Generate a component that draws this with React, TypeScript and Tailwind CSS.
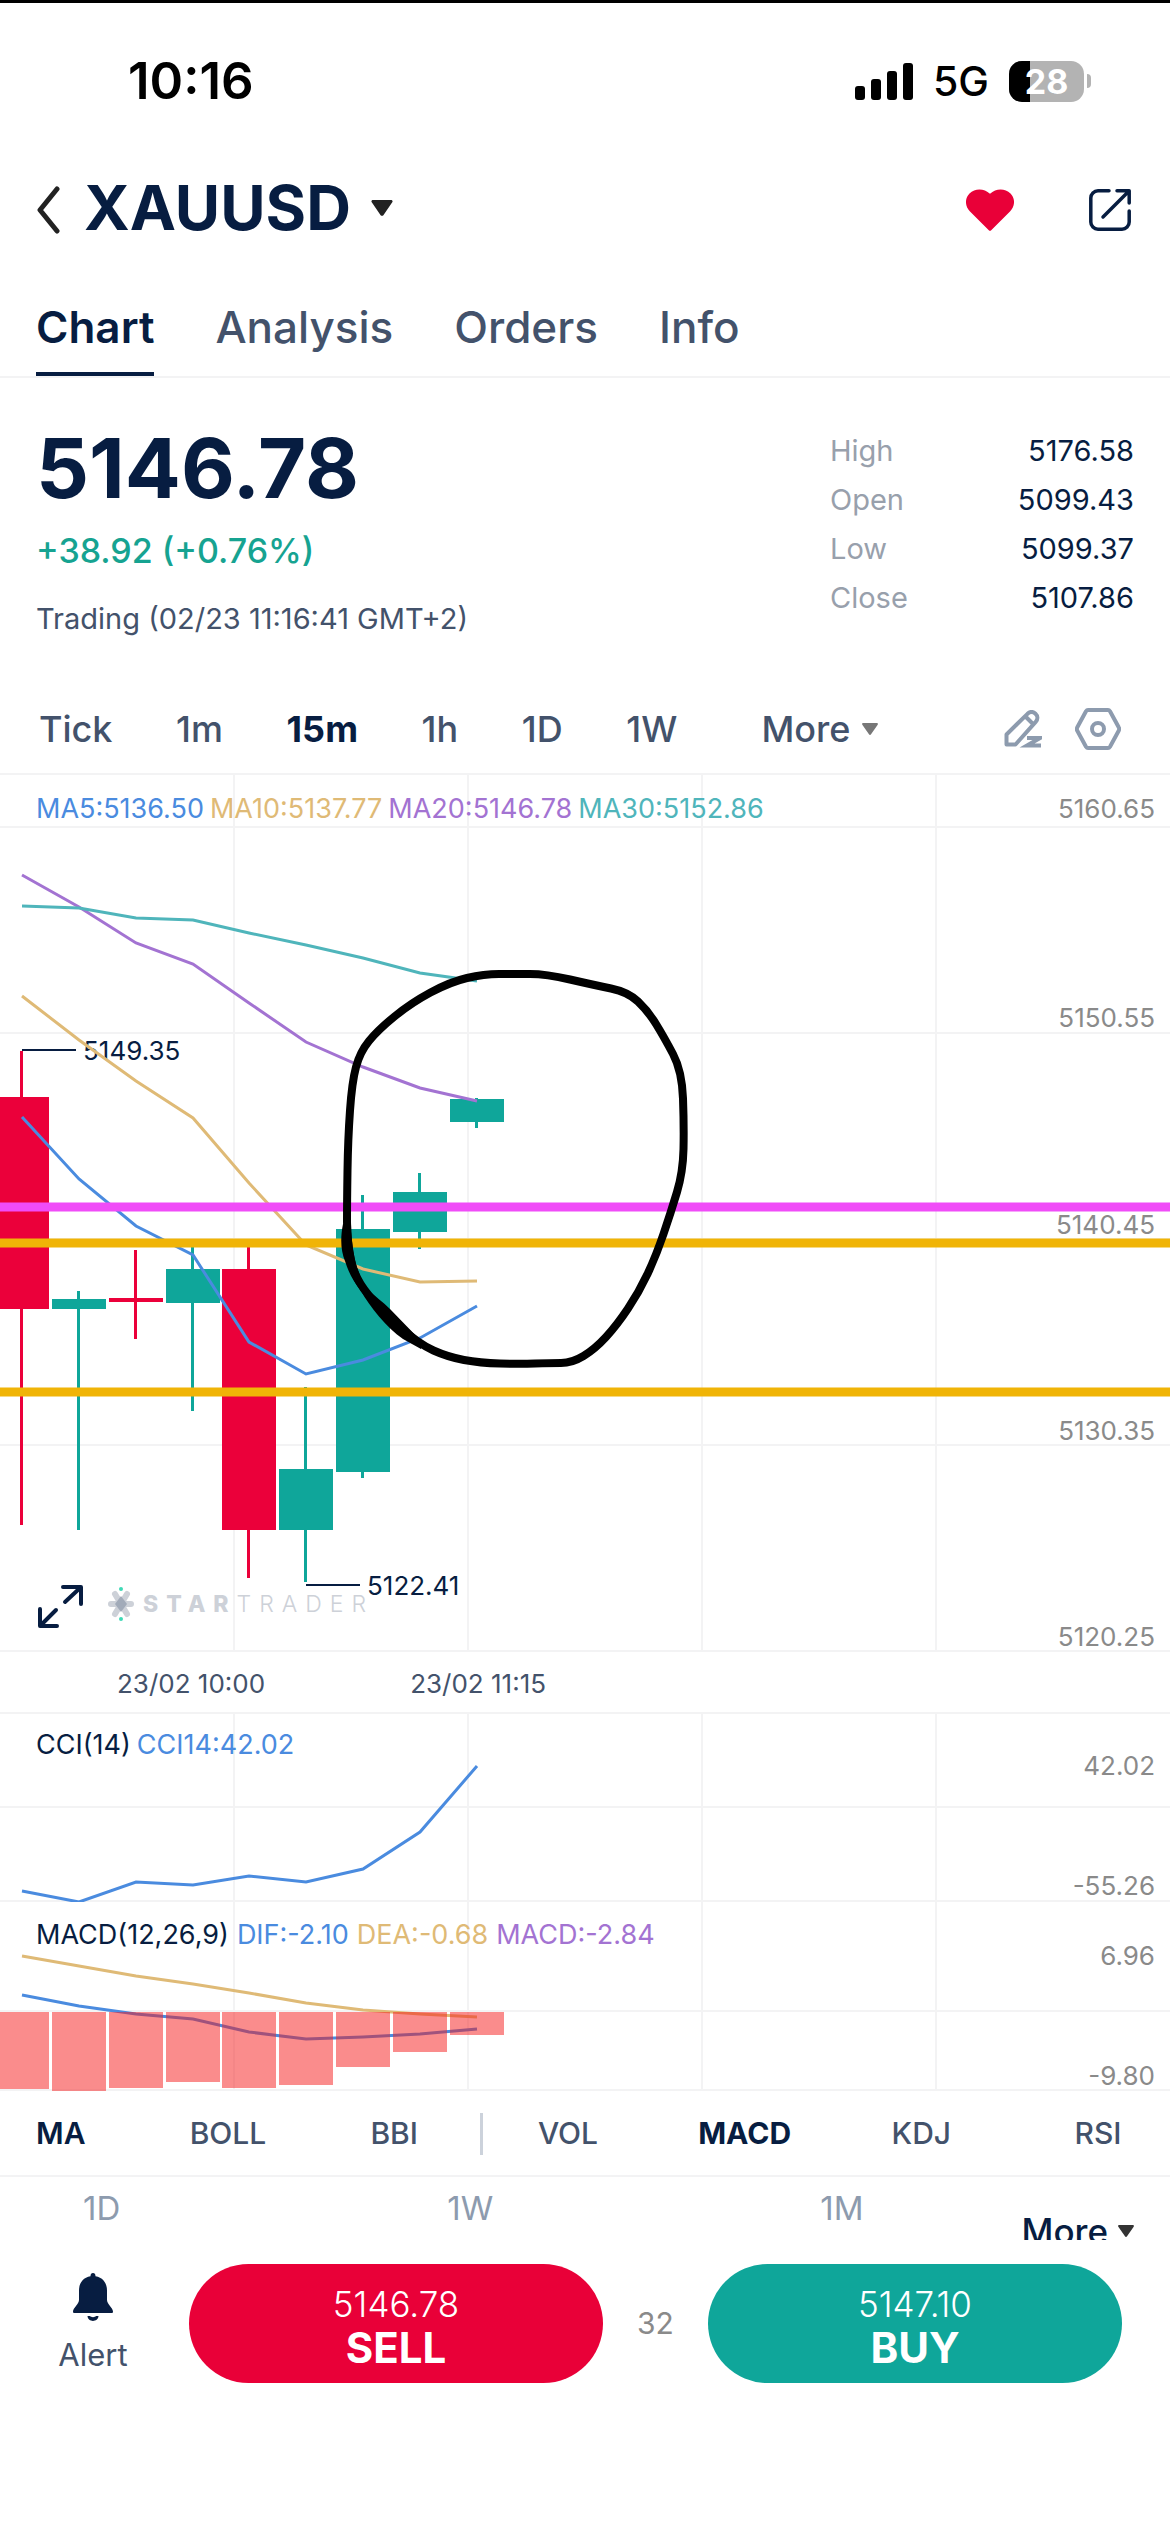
import { useState } from "react"

const STEP = 57
const FIRST_X = 22

const candles = [
  { up: false, top: 1098, bottom: 1310, high: 1052, low: 1526 },
  { up: true, top: 1300, bottom: 1310, high: 1292, low: 1531 },
  { up: false, top: 1299, bottom: 1303, high: 1251, low: 1340 },
  { up: true, top: 1270, bottom: 1304, high: 1245, low: 1412 },
  { up: false, top: 1270, bottom: 1531, high: 1245, low: 1579 },
  { up: true, top: 1470, bottom: 1531, high: 1388, low: 1583 },
  { up: true, top: 1230, bottom: 1473, high: 1196, low: 1479 },
  { up: true, top: 1193, bottom: 1233, high: 1174, low: 1250 },
  { up: true, top: 1100, bottom: 1123, high: 1099, low: 1129 },
]

const ma5 = [1118, 1180, 1227, 1256, 1343, 1375, 1361, 1339, 1307]
const ma10 = [997, 1041, 1082, 1119, 1184, 1246, 1270, 1283, 1282]
const ma20 = [876, 908, 944, 965, 1004, 1043, 1068, 1089, 1102]
const ma30 = [907, 909, 919, 921, 934, 946, 959, 974, 982]
const cci = [1892, 1903, 1883, 1886, 1877, 1883, 1870, 1833, 1767]
const dea = [1957, 1967, 1977, 1985, 1994, 2004, 2011, 2015, 2018]
const dif = [1996, 2007, 2015, 2020, 2033, 2040, 2038, 2035, 2030]
const macd = [2090, 2092, 2089, 2083, 2089, 2086, 2068, 2053, 2036]

const priceLabels = [
  { text: "5160.65", y: 819 },
  { text: "5150.55", y: 1028 },
  { text: "5140.45", y: 1235 },
  { text: "5130.35", y: 1441 },
  { text: "5120.25", y: 1647 },
]

// Freehand loop drawn around the last candles
const loop = [
  [347, 1243], [347, 1203], [348, 1140], [352, 1083], [360, 1053], [378, 1031], [411, 1004],
  [450, 983], [484, 975], [514, 975], [546, 975], [594, 986], [628, 993], [648, 1012],
  [664, 1038], [682, 1072], [684, 1127], [683, 1173], [671, 1213], [656, 1257], [639, 1293],
  [617, 1326], [595, 1350], [572, 1364], [550, 1364], [520, 1365], [480, 1364], [448, 1358],
  [419, 1345], [383, 1313], [355, 1280],
]

const x = (i: number) => FIRST_X + i * STEP - Math.round(i * 0.15)
const line = (ys: number[]) => ys.map((y, i) => `${x(i)},${y}`).join(" ")

// Closed curve through the midpoints of the given points
function smooth(points: number[][]) {
  const mid = (a: number[], b: number[]) => `${(a[0] + b[0]) / 2} ${(a[1] + b[1]) / 2}`
  const last = points[points.length - 1]
  const parts = points.map((p, i) => `Q${p[0]} ${p[1]} ${mid(p, points[(i + 1) % points.length])}`)
  return `M${mid(last, points[0])}${parts.join("")}z`
}

function Grid({ top, bottom, rows }: { top: number; bottom: number; rows: number[] }) {
  return (
    <g stroke="#f3f3f4" strokeWidth="2">
      {[234, 468, 702, 936].map((v) => (
        <line key={v} x1={v} x2={v} y1={top} y2={bottom} />
      ))}
      {rows.map((v) => (
        <line key={v} x1="0" x2="1170" y1={v} y2={v} />
      ))}
    </g>
  )
}

function AxisLabel({ text, y }: { text: string; y: number }) {
  return (
    <text x="1155" y={y} textAnchor="end" fontSize="26" fill="#8a8a8a">
      {text}
    </text>
  )
}

function Caret({ className }: { className: string }) {
  return (
    <svg viewBox="0 0 20 15" className={className} fill="currentColor" aria-hidden="true">
      <path d="M1.5 0h17c1.2 0 1.8 1.2 1.1 2.200l-8.300 12c-.6.900-2 .900-2.600 0L.4 2.200C-.3 1.200.3 0 1.500 0z" />
    </svg>
  )
}

function StatusBar() {
  return (
    <div className="flex items-center justify-between border-t-3 border-black pt-[48px] pr-[79px] pl-[128px] text-black">
      <span className="text-[51px] leading-[60px] font-semibold">10:16</span>
      <div className="flex items-center">
        <svg viewBox="0 0 58 37" className="h-[37px] w-[58px]" aria-label="Signal">
          <rect x="0" y="23" width="10" height="14" rx="3" />
          <rect x="16" y="16" width="10" height="21" rx="3" />
          <rect x="32" y="8" width="10" height="29" rx="3" />
          <rect x="48" y="0" width="10" height="37" rx="3" />
        </svg>
        <span className="ml-5 text-[41px] leading-[60px] font-medium">5G</span>
        <div className="relative ml-5 h-[41px] w-[75px] overflow-hidden rounded-[13px] bg-[#b3b3b3]">
          <div className="h-full w-[28%] bg-black" />
          <span className="absolute inset-0 text-center text-[34px] leading-[41px] font-bold text-white">28</span>
        </div>
        <div className="ml-[3px] h-[14px] w-1 rounded-r-full bg-[#b3b3b3]" />
      </div>
    </div>
  )
}

function Header() {
  return (
    <header className="mt-[59px] flex h-[80px] items-center px-9">
      <button aria-label="Back">
        <svg viewBox="0 0 24 48" className="h-12 w-6" fill="none" stroke="#222" strokeWidth="5" strokeLinecap="round" strokeLinejoin="round">
          <path d="M21 3 4 24l17 21" />
        </svg>
      </button>
      <button className="ml-6 flex items-center gap-5 pb-1">
        <h1 className="text-[62px] leading-[80px] font-bold">XAUUSD</h1>
        <Caret className="h-4 w-[22px] text-[#222]" />
      </button>
      <div className="ml-auto flex items-center gap-[75px] pr-[3px]">
        <button aria-label="Favourite">
          <svg viewBox="0 0 48 42" className="h-[42px] w-12" fill="#e90038">
            <path d="M22.800 41.300 4 22.500C-1.200 17-1.400 9.400 3.500 4.500 9-1 18-1 24 4.800 30-1 39-1 44.500 4.500c4.900 4.900 4.700 12.500-.5 18L25.200 41.300c-.7.7-1.700.7-2.400 0z" />
          </svg>
        </button>
        <button aria-label="Share">
          <svg viewBox="0 0 42 42" className="h-[42px] w-[42px]" fill="none" stroke="#071d41" strokeWidth="3.500" strokeLinecap="round" strokeLinejoin="round">
            <path d="M20 1.800H9C5 1.800 1.800 5 1.800 9v24c0 4 3.200 7.200 7.200 7.200h24c4 0 7.200-3.200 7.200-7.200V22" />
            <path d="M28 1.800h12.200V14M39.500 2.500 14 28" />
          </svg>
        </button>
      </div>
    </header>
  )
}

function Tabs() {
  const [active, setActive] = useState("Chart")
  return (
    <nav className="mt-[20px] flex gap-[61px] border-b-2 border-[#f3f3f4] px-9">
      {["Chart", "Analysis", "Orders", "Info"].map((tab) => (
        <button
          key={tab}
          onClick={() => setActive(tab)}
          className={`border-b-4 pt-[30px] pb-[18px] text-[44px] leading-[54px] ${
            tab === active ? "border-[#071d41] font-semibold" : "border-transparent font-medium text-[#43526b]"
          }`}
        >
          {tab}
        </button>
      ))}
    </nav>
  )
}

function Quote() {
  const stats = [
    ["High", "5176.58"],
    ["Open", "5099.43"],
    ["Low", "5099.37"],
    ["Close", "5107.86"],
  ]
  return (
    <section className="flex justify-between px-9 pt-12">
      <div>
        <p className="text-[83px] leading-[84px] font-bold">5146.78</p>
        <p className="mt-4 text-[34px] leading-[50px] font-medium text-[#16a391]">+38.92 (+0.76%)</p>
        <p className="mt-[22px] text-[29px] leading-[42px] text-[#43526b]">Trading (02/23 11:16:41 GMT+2)</p>
      </div>
      <dl className="w-[304px] text-[29px] leading-[49px]">
        {stats.map(([label, value]) => (
          <div key={label} className="flex justify-between">
            <dt className="text-[#98a0ac]">{label}</dt>
            <dd>{value}</dd>
          </div>
        ))}
      </dl>
    </section>
  )
}

function Intervals() {
  const [active, setActive] = useState("15m")
  return (
    <div className="mt-[45px] flex h-[90px] items-center border-b-2 border-[#f3f3f4] pr-[49px] pl-[39px] text-[36px] font-medium text-[#43526b]">
      <div className="flex w-[59%] justify-between">
        {["Tick", "1m", "15m", "1h", "1D", "1W"].map((item) => (
          <button key={item} onClick={() => setActive(item)} className={item === active ? "font-bold text-[#071d41]" : ""}>
            {item}
          </button>
        ))}
      </div>
      <button className="ml-[84px] flex items-center gap-3">
        More
        <Caret className="h-3 w-4 text-[#777]" />
      </button>
      <div className="ml-auto flex items-center gap-[33px] text-[#8d9bae]">
        <button aria-label="Draw">
          <svg viewBox="0 0 38 38" className="h-[38px] w-[38px]" fill="none" stroke="currentColor" strokeWidth="4" strokeLinejoin="round">
            <path d="M2.500 34.500v-10L23.500 3.800c2.500-2.300 5.500-2.300 8 0s2.500 5.500.2 8L11.500 34.500zM21.500 6.500l8 8" />
            <path d="M23 28h13l-13 7.500h14" strokeLinejoin="miter" />
          </svg>
        </button>
        <button aria-label="Chart settings">
          <svg viewBox="0 0 46 42" className="h-[42px] w-[46px]" fill="none" stroke="currentColor" strokeWidth="4" strokeLinejoin="round">
            <path d="M13 2h20c1 0 1.500.5 2 1.300l8.700 16c.6 1 .6 2.300 0 3.400l-8.700 16c-.5.800-1 1.300-2 1.300H13c-1 0-1.500-.5-2-1.300l-8.700-16c-.6-1-.6-2.300 0-3.400l8.700-16C11.500 2.500 12 2 13 2z" />
            <circle cx="23" cy="21" r="6" />
          </svg>
        </button>
      </div>
    </div>
  )
}

function PriceChart() {
  return (
    <section className="relative">
      <div className="absolute top-[15px] left-9 flex gap-[6px] text-[27px] leading-[38px]">
        <span className="text-[#4a8bdf]">MA5:5136.50</span>
        <span className="text-[#dfba76]">MA10:5137.77</span>
        <span className="text-[#a373d2]">MA20:5146.78</span>
        <span className="text-[#4fb5bb]">MA30:5152.86</span>
      </div>
      <svg viewBox="0 776 1170 877" className="block w-full" role="img" aria-label="XAUUSD candles">
        <Grid top={776} bottom={1652} rows={[828, 1034, 1240, 1446, 1652]} />
        {priceLabels.map((label) => (
          <AxisLabel key={label.text} {...label} />
        ))}

        {/* Watermark */}
        <g stroke="#cdd1d8" strokeWidth="6" strokeLinecap="round">
          <path d="M111 1605h20M115 1595l12 20M127 1595l-12 20" />
        </g>
        <path d="M121 1597l6 8-6 8-6-8z" fill="#a2abb9" />
        <circle cx="121" cy="1590" r="2" fill="#3fd9b6" />
        <circle cx="121" cy="1620" r="2" fill="#3fd9b6" />
        <text x="143" y="1613" fontSize="23" fill="#cdd1d8" className="tracking-[8px]">
          <tspan fontWeight="800">STAR</tspan>
          <tspan fontWeight="300">TRADER</tspan>
        </text>

        {candles.map((c, i) => (
          <g key={i} fill={c.up ? "#0fa69a" : "#eb003a"}>
            <rect x={x(i) - 2} y={c.high} width="3" height={c.low - c.high} />
            <rect x={x(i) - 27} y={c.top} width="54" height={c.bottom - c.top} />
          </g>
        ))}

        {/* High and low callouts */}
        <path d="M22 1051h54M306 1586h54" stroke="#071d41" strokeWidth="2" />
        <g fontSize="26" fill="#071d41">
          <text x="83" y="1061">5149.35</text>
          <text x="367" y="1596">5122.41</text>
        </g>

        <g fill="none" strokeWidth="3">
          <polyline points={line(ma5)} stroke="#4a8bdf" />
          <polyline points={line(ma10)} stroke="#dfba76" />
          <polyline points={line(ma20)} stroke="#a373d2" />
          <polyline points={line(ma30)} stroke="#4fb5bb" />
        </g>

        <path d="M0 1208h1170" stroke="#f04cf8" strokeWidth="9" />
        <path d="M0 1244h1170M0 1393h1170" stroke="#f0b407" strokeWidth="9" />

        <path d={smooth(loop)} fill="none" stroke="#000" strokeWidth="8" strokeLinejoin="round" />
        <path d="M343 1225C340 1240 341 1252 345 1262C349 1275 354 1283 361 1292C370 1308 386 1328 403 1340L421 1350L423 1344L390 1310C383 1303 376 1298 367 1290C358 1276 352 1258 351 1225z" />
      </svg>
      <button aria-label="Full screen" className="absolute bottom-[22px] left-9">
        <svg viewBox="36 1583 48 47" className="h-[47px] w-12" fill="none" stroke="#071d41" strokeWidth="4" strokeLinecap="round" strokeLinejoin="round">
          <path d="M63 1587h18v17M80 1588l-15 14M40 1609v17h17M41 1625l15-15" />
        </svg>
      </button>
    </section>
  )
}

function CciChart() {
  return (
    <section className="relative">
      <div className="absolute top-[14px] left-9 flex gap-[6px] text-[27px] leading-[38px]">
        <span>CCI(14)</span>
        <span className="text-[#4a8bdf]">CCI14:42.02</span>
      </div>
      <svg viewBox="0 1713 1170 190" className="block w-full" role="img" aria-label="CCI">
        <Grid top={1713} bottom={1903} rows={[1714, 1808, 1902]} />
        <AxisLabel text="42.02" y={1776} />
        <AxisLabel text="-55.26" y={1896} />
        <polyline points={line(cci)} fill="none" stroke="#4a8bdf" strokeWidth="3" />
      </svg>
    </section>
  )
}

function MacdChart() {
  return (
    <section className="relative">
      <div className="absolute top-[14px] left-9 flex gap-[8px] text-[27px] leading-[38px]">
        <span>MACD(12,26,9)</span>
        <span className="text-[#4a8bdf]">DIF:-2.10</span>
        <span className="text-[#dfba76]">DEA:-0.68</span>
        <span className="text-[#a373d2]">MACD:-2.84</span>
      </div>
      <svg viewBox="0 1903 1170 190" className="block w-full" role="img" aria-label="MACD">
        <Grid top={1903} bottom={2091} rows={[2012, 2091]} />
        <AxisLabel text="6.96" y={1966} />
        <AxisLabel text="-9.80" y={2086} />
        <polyline points={line(dif)} fill="none" stroke="#4a8bdf" strokeWidth="3" />
        <polyline points={line(dea)} fill="none" stroke="#dfba76" strokeWidth="3" />
        {macd.map((y, i) => (
          <rect key={i} x={x(i) - 27} y="2013" width="54" height={y - 2013} fill="#f51a1a" fillOpacity="0.5" />
        ))}
      </svg>
    </section>
  )
}

function Indicators() {
  const [overlay, setOverlay] = useState("MA")
  const [study, setStudy] = useState("MACD")
  return (
    <div className="flex h-[85px] items-center border-b-2 border-[#f3f3f4] pr-6 pl-9 text-[30px] font-medium text-[#43526b]">
      <div className="flex flex-[382] justify-between">
        {["MA", "BOLL", "BBI"].map((item) => (
          <button key={item} onClick={() => setOverlay(item)} className={item === overlay ? "font-semibold text-[#071d41]" : ""}>
            {item}
          </button>
        ))}
      </div>
      <div className="mr-[37px] ml-[62px] h-[42px] w-[3px] bg-[#ccd2db]" />
      <div className="flex flex-[626] justify-between">
        {["VOL", "MACD", "KDJ", "RSI"].map((item) => (
          <button key={item} onClick={() => setStudy(item)} className={`w-24 text-center ${item === study ? "font-bold text-[#071d41]" : ""}`}>
            {item}
          </button>
        ))}
      </div>
    </div>
  )
}

function Periods() {
  return (
    <div className="flex h-[63px] items-start overflow-hidden pr-9 pl-[83px] text-[33px] leading-[40px] text-[#8d9bae]">
      <div className="flex flex-1 justify-between pt-[11px]">
        <button>1D</button>
        <button>1W</button>
        <button>1M</button>
      </div>
      <button className="ml-[158px] flex items-center gap-[10px] pt-[34px] text-[35px] font-medium text-[#071d41]">
        More
        <Caret className="h-3 w-4 text-[#333]" />
      </button>
    </div>
  )
}

function TradeBar() {
  return (
    <footer className="flex items-center px-12 pt-6 pb-[100px]">
      <button className="flex w-[90px] flex-col items-center text-[31px] leading-[40px] text-[#43526b]">
        <svg viewBox="0 0 40 48" className="mb-[14px] h-12 w-10" fill="#071d41">
          <path d="M20 0c1.500 0 2.500 1 2.500 3.200C30 4.500 34 10 34 17.500V27c0 4 6 8 6 11.500 0 1-.5 1.500-1.500 1.500h-37C.5 40 0 39.500 0 38.500 0 35 6 31 6 27v-9.500C6 10 10 4.500 17.500 3.200 17.500 1 18.500 0 20 0z" />
          <path d="M14.500 43h2.500c.8 1.500 5.200 1.500 6 0h2.500c-.5 6.500-10.500 6.500-11 0z" />
        </svg>
        Alert
      </button>
      <button className="ml-[51px] h-[119px] flex-1 rounded-full bg-[#e90038] pt-1 text-white">
        <span className="block text-[35px] leading-[43px] font-light">5146.78</span>
        <span className="block text-[42px] leading-[43px] font-bold">SELL</span>
      </button>
      <span className="w-[105px] text-center text-[30px] text-[#8a8a8a]">32</span>
      <button className="h-[119px] flex-1 rounded-full bg-[#0fa69a] pt-1 text-white">
        <span className="block text-[35px] leading-[43px] font-light">5147.10</span>
        <span className="block text-[42px] leading-[43px] font-bold">BUY</span>
      </button>
    </footer>
  )
}

export default function App() {
  return (
    <div className="min-h-screen bg-white font-['Inter','Liberation_Sans',sans-serif] text-[#071d41]">
      <StatusBar />
      <Header />
      <Tabs />
      <Quote />
      <Intervals />
      <PriceChart />
      <div className="flex gap-[145px] pt-[13px] pb-[9px] pl-[117px] text-[26px] leading-[38px] text-[#43526b]">
        <span>23/02 10:00</span>
        <span>23/02 11:15</span>
      </div>
      <CciChart />
      <MacdChart />
      <Indicators />
      <Periods />
      <TradeBar />
    </div>
  )
}
